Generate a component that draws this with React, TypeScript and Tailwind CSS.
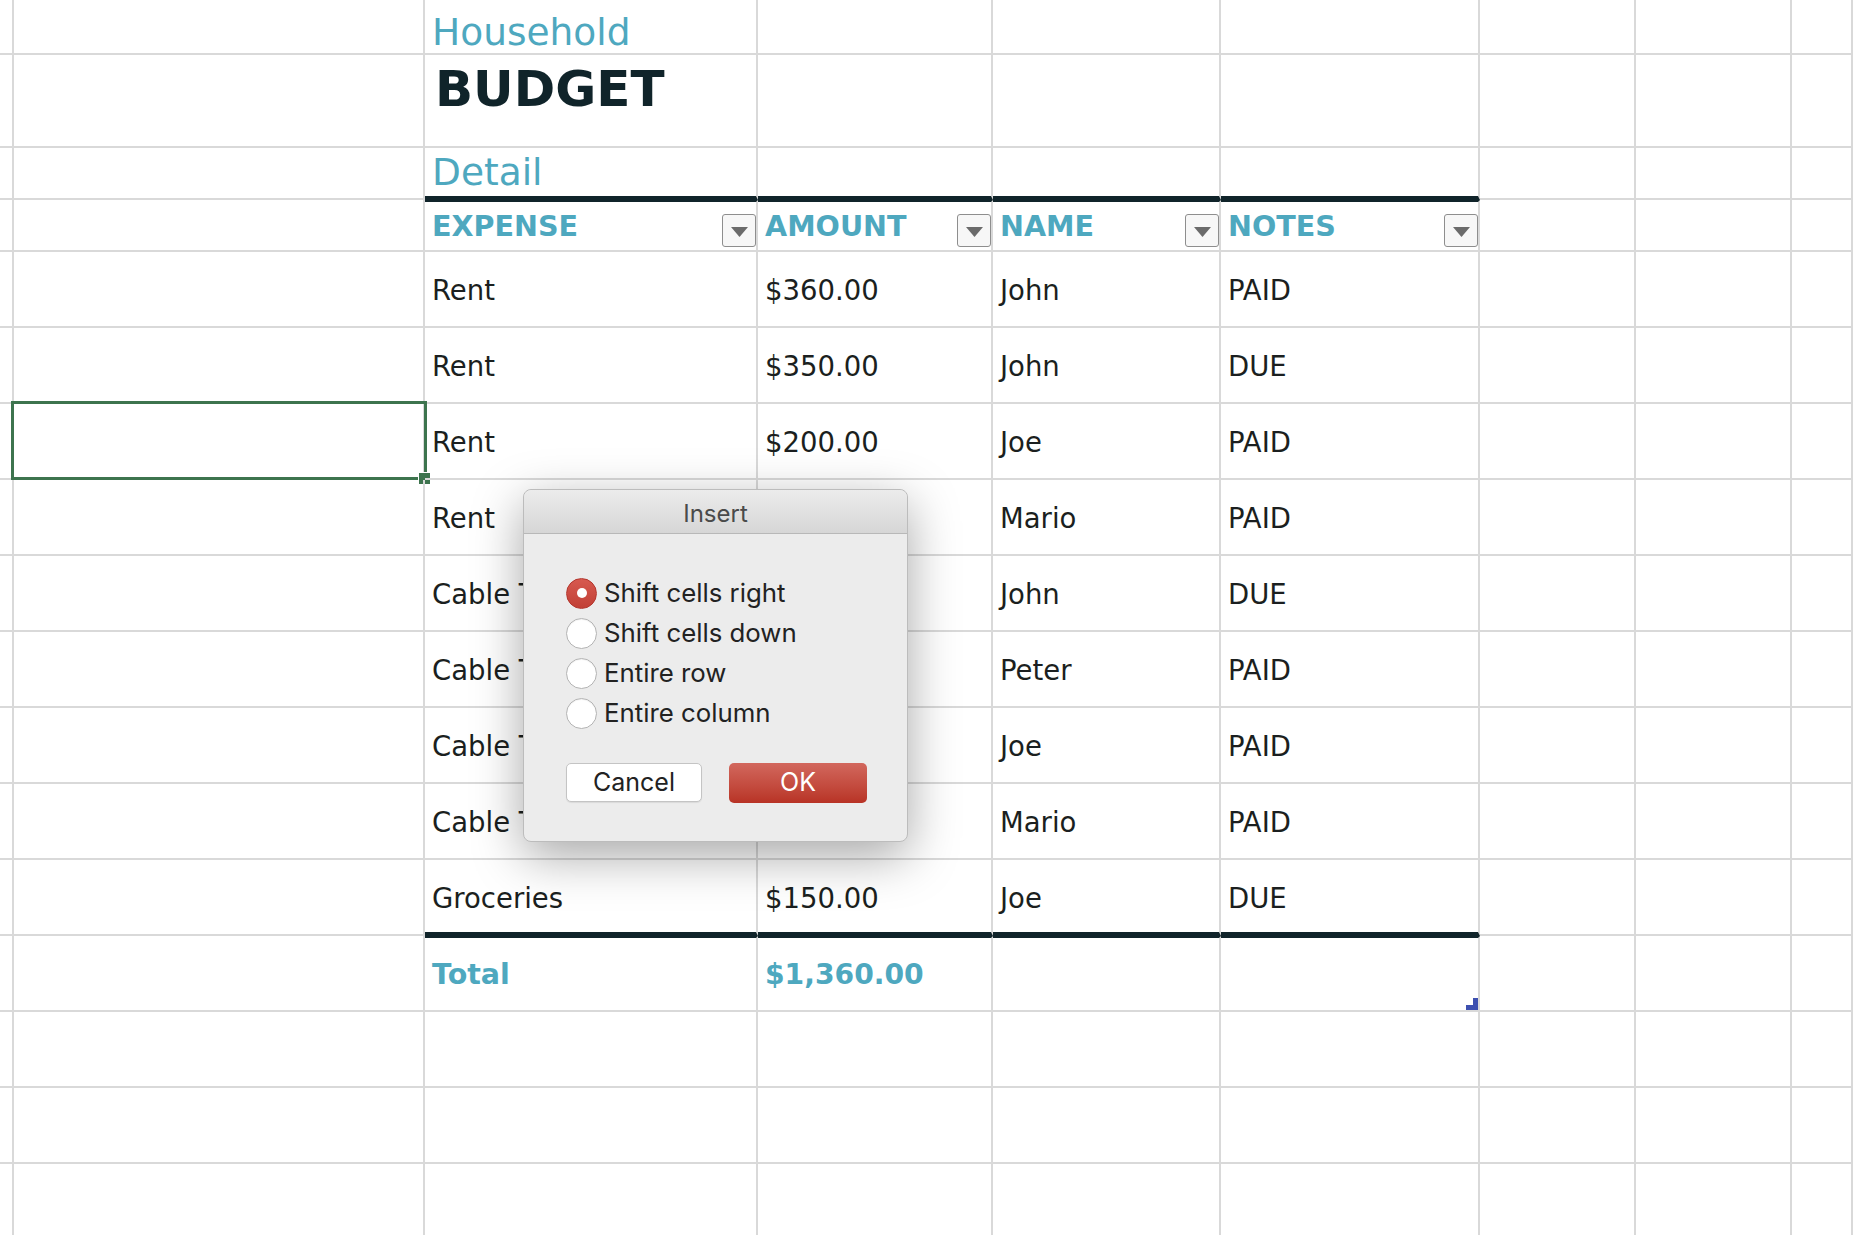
import React from 'react';

// column widths include the 2px right gridline
const W = ['w-[14px]', 'w-[411px]', 'w-[333px]', 'w-[235px]', 'w-[228px]', 'w-[259px]', 'w-[156px]', 'w-[156px]', 'w-[61px]'];

const GRID_B = 'border-b-2 border-b-[#d9d9d9]';
const THICK_B = 'border-b-4 border-b-[#10242a]';
const THICK_T = 'border-t-2 border-t-[#10242a]';

type CellProps = {
  w: string;
  bottom?: string;
  top?: string;
  className?: string;
  children?: React.ReactNode;
};

const Cell: React.FC<CellProps> = ({ w, bottom = GRID_B, top = '', className = '', children }) => (
  <div className={`relative shrink-0 h-full border-r-2 border-r-[#d9d9d9] ${bottom} ${top} ${w} ${className}`}>
    {children}
  </div>
);

const Row: React.FC<{ h: string; children?: React.ReactNode }> = ({ h, children }) => (
  <div className={`flex ${h}`}>{children}</div>
);

const EmptyRow: React.FC<{ h?: string }> = ({ h = 'h-[76px]' }) => (
  <Row h={h}>
    {W.map((w, i) => (
      <Cell key={i} w={w} />
    ))}
  </Row>
);

const Dropdown: React.FC = () => (
  <div className="self-end mb-[3px] w-[34px] h-[33px] shrink-0 rounded-[3px] border border-[#8e8e8e] bg-[#f7f7f7] flex items-center justify-center">
    <svg width="17" height="10" viewBox="0 0 17 10" className="mt-[3px]">
      <path d="M0 0h17L8.5 10z" fill="#6b6b6b" />
    </svg>
  </div>
);

const rows = [
  ['Rent', '$360.00', 'John', 'PAID'],
  ['Rent', '$350.00', 'John', 'DUE'],
  ['Rent', '$200.00', 'Joe', 'PAID'],
  ['Rent', '$100.00', 'Mario', 'PAID'],
  ['Cable TV', '$50.00', 'John', 'DUE'],
  ['Cable TV', '$50.00', 'Peter', 'PAID'],
  ['Cable TV', '$50.00', 'Joe', 'PAID'],
  ['Cable TV', '$50.00', 'Mario', 'PAID'],
  ['Groceries', '$150.00', 'Joe', 'DUE'],
];

const Radio: React.FC<{ checked?: boolean; label: string }> = ({ checked, label }) => (
  <div className="flex items-center h-[40px]">
    {checked ? (
      <div className="w-[31px] h-[31px] rounded-full bg-linear-to-b from-[#d7594f] to-[#c13f35] border border-[#b4372e] flex items-center justify-center">
        <div className="w-[10px] h-[10px] rounded-full bg-white" />
      </div>
    ) : (
      <div className="w-[31px] h-[31px] rounded-full bg-white border border-[#b3b3b3] shadow-[inset_0_1px_1px_rgba(0,0,0,0.06)]" />
    )}
    <span className="ml-[7px] text-[25.8px] text-[#222]">{label}</span>
  </div>
);

const InsertDialog: React.FC = () => (
  <div className="absolute left-[523px] top-[489px] z-10 w-[385px] h-[353px] rounded-[8px] border border-[#bcbcbc] bg-[#ececec] shadow-[0_14px_50px_rgba(0,0,0,0.35)] font-['Inter',sans-serif]">
    <div className="h-[44px] pt-[4px] flex items-center justify-center rounded-t-[8px] border-b border-b-[#b8b8b8] bg-linear-to-b from-[#ececec] to-[#d6d6d6] text-[24px] text-[#4a4a4a]">
      Insert
    </div>
    <div className="pl-[42px] pt-[39px]">
      <Radio checked label="Shift cells right" />
      <Radio label="Shift cells down" />
      <Radio label="Entire row" />
      <Radio label="Entire column" />
      <div className="flex mt-[30px] gap-[27px]">
        <button className="w-[136px] h-[39px] rounded-[5px] bg-white border border-[#c4c4c4] shadow-[0_1px_1px_rgba(0,0,0,0.08)] text-[25px] text-[#222]">
          Cancel
        </button>
        <button className="w-[138px] h-[40px] rounded-[5px] bg-linear-to-b from-[#d2675d] to-[#b83325] text-[25px] text-white">
          OK
        </button>
      </div>
    </div>
  </div>
);

const App: React.FC = () => {
  return (
    <div className="relative w-[1853px] h-[1235px] overflow-hidden bg-white font-['DejaVu_Sans',sans-serif]">
      {/* Household */}
      <Row h="h-[55px]">
        <Cell w={W[0]} />
        <Cell w={W[1]} />
        <Cell w={W[2]}>
          <div className="pl-[7px] pt-[14px] text-[37.5px] leading-none text-[#4ea8bf] whitespace-nowrap">Household</div>
        </Cell>
        {W.slice(3).map((w, i) => (
          <Cell key={i} w={w} />
        ))}
      </Row>

      {/* BUDGET */}
      <Row h="h-[93px]">
        <Cell w={W[0]} />
        <Cell w={W[1]} />
        <Cell w={W[2]}>
          <div className="pl-[10px] pt-[9px] text-[50px] leading-none font-bold text-[#10242a] whitespace-nowrap">BUDGET</div>
        </Cell>
        {W.slice(3).map((w, i) => (
          <Cell key={i} w={w} />
        ))}
      </Row>

      {/* Detail */}
      <Row h="h-[52px]">
        <Cell w={W[0]} />
        <Cell w={W[1]} />
        <Cell w={W[2]} bottom={THICK_B}>
          <div className="pl-[7px] pt-[6px] text-[37.5px] leading-none text-[#4ea8bf]">Detail</div>
        </Cell>
        <Cell w={W[3]} bottom={THICK_B} />
        <Cell w={W[4]} bottom={THICK_B} />
        <Cell w={W[5]} bottom={THICK_B} />
        <Cell w={W[6]} />
        <Cell w={W[7]} />
        <Cell w={W[8]} />
      </Row>

      {/* table header */}
      <Row h="h-[52px]">
        <Cell w={W[0]} />
        <Cell w={W[1]} />
        {['EXPENSE', 'AMOUNT', 'NAME', 'NOTES'].map((t, i) => (
          <Cell key={t} w={W[i + 2]} top={THICK_T} className="flex">
            <div className="grow pl-[7px] pt-[10px] text-[28.6px] leading-none font-bold text-[#4ea8bf]">{t}</div>
            <Dropdown />
          </Cell>
        ))}
        <Cell w={W[6]} />
        <Cell w={W[7]} />
        <Cell w={W[8]} />
      </Row>

      {/* table body */}
      {rows.map((r, ri) => {
        const last = ri === rows.length - 1;
        return (
          <Row key={ri} h="h-[76px]">
            <Cell w={W[0]} />
            <Cell w={W[1]}>
              {ri === 2 && (
                <>
                  <div className="absolute left-[-3px] top-[-3px] w-[416px] h-[79px] border-[3px] border-[#3d744e]" />
                  <div className="absolute left-[404px] top-[68px] w-[13px] h-[13px] bg-[#3d744e] border border-white" />
                </>
              )}
            </Cell>
            {r.map((v, ci) => (
              <Cell key={ci} w={W[ci + 2]} bottom={last ? THICK_B : GRID_B}>
                <div className="pl-[7px] pt-[25px] text-[27.5px] leading-none text-[#1b1f20] whitespace-nowrap">{v}</div>
              </Cell>
            ))}
            <Cell w={W[6]} />
            <Cell w={W[7]} />
            <Cell w={W[8]} />
          </Row>
        );
      })}

      {/* total */}
      <Row h="h-[76px]">
        <Cell w={W[0]} />
        <Cell w={W[1]} />
        <Cell w={W[2]} top={THICK_T}>
          <div className="pl-[7px] pt-[23px] text-[28.5px] leading-none font-bold text-[#4ea8bf]">Total</div>
        </Cell>
        <Cell w={W[3]} top={THICK_T}>
          <div className="pl-[7px] pt-[23px] text-[28.2px] leading-none font-bold text-[#4ea8bf]">$1,360.00</div>
        </Cell>
        <Cell w={W[4]} top={THICK_T} />
        <Cell w={W[5]} top={THICK_T}>
          <svg width="12" height="12" viewBox="0 0 12 12" className="absolute left-[245px] top-[60px]">
            <path d="M7 0h5v12H0V7h7z" fill="#3d50b0" />
          </svg>
        </Cell>
        <Cell w={W[6]} />
        <Cell w={W[7]} />
        <Cell w={W[8]} />
      </Row>

      <EmptyRow />
      <EmptyRow />
      <EmptyRow />

      <InsertDialog />
    </div>
  );
};

export default App;
